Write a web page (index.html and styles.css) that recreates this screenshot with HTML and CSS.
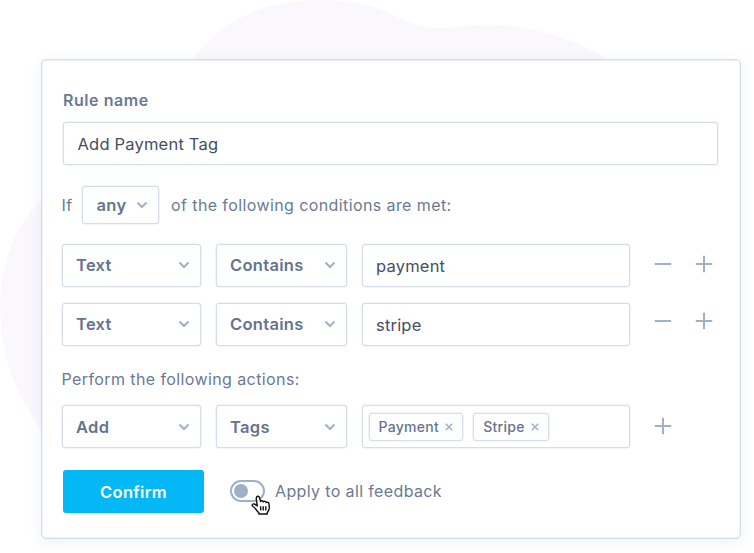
FILE: index.html
```html
<!DOCTYPE html>
<html lang="en">
<head>
    <meta charset="UTF-8">
    <meta name="viewport" content="width=device-width, initial-scale=1.0">
    <title>Rule Editor</title>
    <link rel="stylesheet" href="styles.css">
</head>
<body>
    <!-- Shared icons -->
    <svg class="icon-defs" width="0" height="0">
        <symbol id="chevron" viewBox="0 0 12 8"><path d="M1.5 1.5 L6 6 L10.5 1.5"/></symbol>
        <symbol id="minus" viewBox="0 0 18 18"><path d="M0.8 9 H17.2"/></symbol>
        <symbol id="plus" viewBox="0 0 18 18"><path d="M0.8 9 H17.2 M9 0.8 V17.2"/></symbol>
        <symbol id="cross" viewBox="0 0 8 8"><path d="M0.8 0.8 L7.2 7.2 M7.2 0.8 L0.8 7.2"/></symbol>
    </svg>

    <!-- Background shape -->
    <svg class="blob" viewBox="0 0 754 553">
        <path d="M193 59 C218 23 262 0 320 0 C392 0 398 28 437 28 C455 28 465 25 487 25 C530 25 570 37 608 59 L620 300 L300 520 L80 470 C30 430 0 370 0 307 C0 262 16 225 42 199 Z"/>
    </svg>

    <form class="card">
        <label class="rule-label" for="ruleName">Rule name</label>
        <input class="field rule-input" type="text" id="ruleName" value="Add Payment Tag">

        <div class="match-row">
            <span>If</span>
            <button type="button" class="field select select-any">any <svg class="chevron"><use href="#chevron"/></svg></button>
            <span class="match-text">of the following conditions are met:</span>
        </div>

        <!-- Conditions -->
        <div class="row">
            <button type="button" class="field select">Text <svg class="chevron"><use href="#chevron"/></svg></button>
            <button type="button" class="field select">Contains <svg class="chevron"><use href="#chevron"/></svg></button>
            <input class="field" type="text" value="payment">
            <div class="row-actions">
                <svg><use href="#minus"/></svg>
                <svg><use href="#plus"/></svg>
            </div>
        </div>
        <div class="row row-second">
            <button type="button" class="field select">Text <svg class="chevron"><use href="#chevron"/></svg></button>
            <button type="button" class="field select">Contains <svg class="chevron"><use href="#chevron"/></svg></button>
            <input class="field" type="text" value="stripe">
            <div class="row-actions">
                <svg><use href="#minus"/></svg>
                <svg><use href="#plus"/></svg>
            </div>
        </div>

        <!-- Actions -->
        <div class="actions-label">Perform the following actions:</div>
        <div class="row">
            <button type="button" class="field select">Add <svg class="chevron"><use href="#chevron"/></svg></button>
            <button type="button" class="field select">Tags <svg class="chevron"><use href="#chevron"/></svg></button>
            <div class="field tags">
                <span class="tag">Payment <svg><use href="#cross"/></svg></span>
                <span class="tag">Stripe <svg><use href="#cross"/></svg></span>
            </div>
            <div class="row-actions">
                <svg><use href="#plus"/></svg>
            </div>
        </div>

        <div class="footer">
            <button type="button" class="confirm">Confirm</button>
            <div class="toggle">
                <div class="knob"></div>
                <svg class="cursor" viewBox="0 0 20 20">
                    <path d="M5.6 2 C6.4 .8 7.9 1 8.4 2.3 L9.5 6.2 C10.3 5.4 11.9 5.7 12.3 6.7 C13.2 5.9 14.8 6.3 15.1 7.4 C16.4 6.8 17.8 7.6 18 8.9 L18.3 12 C18.4 14.6 17.4 16.2 16.3 17.5 L16.2 19 H8 L7.8 17.6 C6.2 16.6 5.4 15.2 4.4 13.6 C3.5 12.3 2.2 11.9 1.4 10.9 C.7 9.6 2 8.5 3.3 9 L6.2 10.6 L5.3 4 C5.2 3.2 5.3 2.5 5.6 2 Z"/>
                    <path d="M9.6 11.2 L9.8 15.4 M12.2 11.2 V15.4 M14.8 11.2 V15.4"/>
                </svg>
            </div>
            <span class="toggle-label">Apply to all feedback</span>
        </div>
    </form>
</body>
</html>
```
FILE: styles.css
```css
* {
    box-sizing: border-box;
}

body {
    margin: 0;
    width: 754px;
    height: 553px;
    overflow: hidden;
    background: #fff;
    font-family: Inter, "Liberation Sans", sans-serif;
    font-size: 16px;
    letter-spacing: 0.4px;
    color: #6b7a94;
}

.icon-defs {
    position: absolute;
}

.blob {
    position: absolute;
    top: 0;
    left: 0;
    width: 754px;
    height: 553px;
    fill: #faf8fd;
}

.card {
    position: relative;
    width: 700px;
    height: 480px;
    margin: 59px 0 0 41px;
    padding: 29px 0 0 19.5px;
    background: #fff;
    border: 1.5px solid #d3deea;
    border-radius: 5px;
    box-shadow: 0 3px 14px rgba(100, 140, 190, 0.12), inset 0 0 0 0.5px #dfe6f0;
}

button,
input {
    font-family: inherit;
    margin: 0;
    outline: none;
}

.field {
    height: 43px;
    padding: 0 13.5px;
    background: #fff;
    border: 1px solid #d3deea;
    border-radius: 3px;
    box-shadow: 0 0 0 0.5px #e6ecf4;
    color: #444f60;
    font-size: 16.5px;
    letter-spacing: 0.2px;
    min-width: 0;
}

.rule-label {
    display: block;
    margin-left: 1.5px;
    line-height: 22px;
    font-weight: 600;
    letter-spacing: 0.55px;
}

.rule-input {
    display: block;
    width: 655px;
    margin: 11px 0 0 1.5px;
}

.match-row {
    display: flex;
    align-items: center;
    height: 38px;
    margin-top: 21px;
}

.select {
    display: flex;
    align-items: center;
    justify-content: space-between;
    padding-right: 10px;
    padding-bottom: 1px;
    color: #64748f;
    font-weight: 600;
    letter-spacing: 0.3px;
    cursor: pointer;
}

.select-any {
    width: 77px;
    height: 38px;
    margin: 0 12px 0 9.5px;
}

.chevron {
    width: 12px;
    height: 8px;
}

svg {
    fill: none;
    stroke: #a0b0c7;
    stroke-width: 2;
}

.blob {
    stroke: none;
}

.row {
    display: grid;
    grid-template-columns: 139px 131px 268px 60px;
    column-gap: 15px;
    margin-top: 20px;
}

.row-second {
    margin-top: 16px;
}

.row-actions {
    display: flex;
    gap: 23px;
    padding: 11px 0 0 9px;
}

.row-actions svg {
    flex: none;
    width: 18px;
    height: 18px;
}

.row-second .row-actions {
    padding-top: 9px;
}

.actions-label {
    margin-top: 22px;
    line-height: 22px;
}

.actions-label + .row {
    margin-top: 15px;
}

.actions-label + .row .select {
    padding-bottom: 0;
}

.actions-label + .row .row-actions {
    padding-top: 12px;
}

.tags {
    display: flex;
    align-items: center;
    gap: 10px;
    padding: 0 6px;
}

.tag {
    display: flex;
    align-items: center;
    gap: 6px;
    height: 28px;
    padding: 0 9px;
    border: 1px solid #d3deea;
    border-radius: 3px;
    box-shadow: 0 0 0 0.5px #e6ecf4;
    color: #64748f;
    font-size: 14px;
    font-weight: 500;
    letter-spacing: 0.3px;
}

.tag svg {
    width: 8px;
    height: 8px;
    stroke-width: 1.5;
}

.footer {
    display: flex;
    align-items: center;
    margin: 22px 0 0 1.5px;
}

.confirm {
    width: 141px;
    height: 43px;
    border: none;
    border-radius: 3px;
    background: #04b7f5;
    color: #fff;
    font-size: 16.5px;
    font-weight: 600;
    letter-spacing: 0.3px;
    cursor: pointer;
}

.toggle {
    position: relative;
    width: 35px;
    height: 22px;
    margin: -2px 10px 0 26px;
    padding: 2px;
    border: 2px solid #a0b0c7;
    border-radius: 11px;
}

.toggle-label {
    margin-top: -2px;
    letter-spacing: 0.37px;
}

.knob {
    width: 14px;
    height: 14px;
    border-radius: 50%;
    background: #a0b0c7;
}

/* Pointer over the toggle */
.cursor {
    position: absolute;
    top: 13px;
    left: 19px;
    width: 20px;
    height: 20px;
    fill: #fff;
    stroke: #111;
    stroke-width: 1.4;
}
```
